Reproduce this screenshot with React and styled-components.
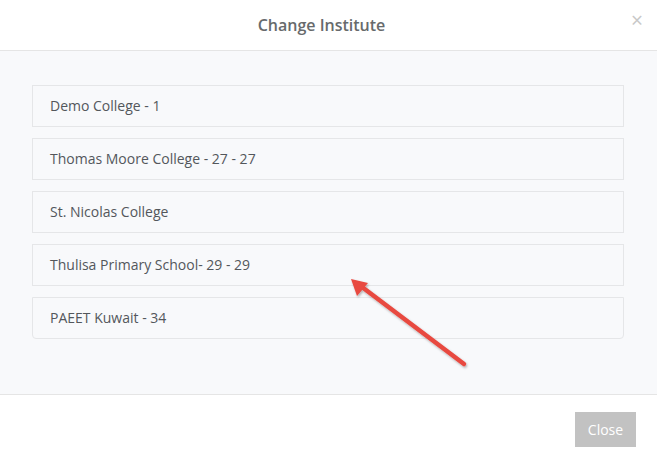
import React from "react";
import styled, { createGlobalStyle } from "styled-components";

const Global = createGlobalStyle`
  html, body { margin: 0; padding: 0; background: #fff; }
  body { font-family: "Open Sans", "Liberation Sans", sans-serif; }
  * { box-sizing: border-box; }
`;

const Modal = styled.div`
  position: relative;
  width: 657px;
  height: 464px;
  display: flex;
  flex-direction: column;
  background: #fff;
`;

const Header = styled.div`
  height: 51px;
  display: flex;
  align-items: center;
  justify-content: center;
  position: relative;
  padding-right: 14px;
  border-bottom: 1px solid #e5e5e5;
`;

const Title = styled.h4`
  margin: 0;
  font-size: 16px;
  font-weight: 600;
  color: #676a6c;
  padding-top: 1px;
`;

const CloseX = styled.button`
  position: absolute;
  right: 14px;
  top: 10px;
  border: 0;
  background: none;
  font-size: 21px;
  line-height: 1;
  color: #c8c8c8;
  padding: 0;
  font-family: "Open Sans", "Liberation Sans", sans-serif;
  cursor: pointer;
`;

const Body = styled.div`
  flex: 1;
  background: #f8f9fb;
  padding: 34px 33px 55px 32px;
  display: flex;
  flex-direction: column;
  gap: 11px;
  border-bottom: 1px solid #e5e5e5;
`;

const Item = styled.div`
  height: 42px;
  display: flex;
  align-items: center;
  padding: 0 17px;
  border: 1px solid #e5e6e8;
  border-radius: ${(p) => (p.$last ? "0 0 4px 4px" : "0")};
  font-size: 14px;
  color: #53575b;
  background: #f8f9fb;
`;

const Footer = styled.div`
  height: 70px;
  display: flex;
  align-items: center;
  justify-content: flex-end;
  padding: 0 21px 0 0;
`;

const Button = styled.button`
  width: 61px;
  height: 35px;
  border: 0;
  background: #c2c2c2;
  color: #fff;
  font-size: 14px;
  font-family: "Open Sans", "Liberation Sans", sans-serif;
  border-radius: 0;
`;

const Arrow = styled.svg`
  position: absolute;
  left: 0;
  top: 0;
  pointer-events: none;
`;

const items = [
  "Demo College - 1",
  "Thomas Moore College - 27 - 27",
  "St. Nicolas College",
  "Thulisa Primary School- 29 - 29",
  "PAEET Kuwait - 34",
];

export default function App() {
  return (
    <>
      <Global />
      <Modal>
        <Header>
          <Title>Change Institute</Title>
          <CloseX>×</CloseX>
        </Header>
        <Body>
          {items.map((t, i) => (
            <Item key={t} $last={i === items.length - 1}>{t}</Item>
          ))}
        </Body>
        <Footer>
          <Button>Close</Button>
        </Footer>
        <Arrow width="657" height="464" viewBox="0 0 657 464">
          <defs>
            <filter id="sh" x="-20%" y="-20%" width="140%" height="140%">
              <feDropShadow dx="1" dy="1.5" stdDeviation="1.2" floodColor="#000" floodOpacity="0.3" />
            </filter>
          </defs>
          <g filter="url(#sh)">
            <line x1="464" y1="364" x2="362" y2="287" stroke="#e8483f" strokeWidth="4.5" strokeLinecap="round" />
            <polygon points="351,279 368,283 357,296" fill="#e8483f" />
          </g>
        </Arrow>
      </Modal>
    </>
  );
}
